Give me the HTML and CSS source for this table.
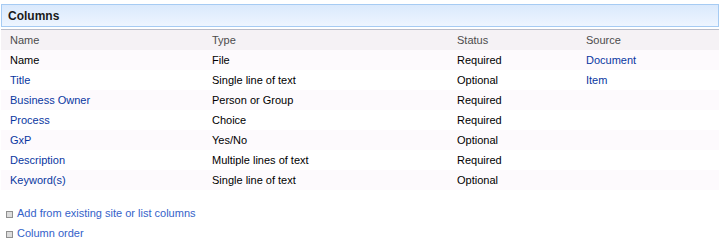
FILE: index.html
```html
<!DOCTYPE html>
<html lang="en">
<head>
    <meta charset="UTF-8">
    <title>Columns</title>
    <link rel="stylesheet" href="styles.css">
</head>
<body>
    <div class="section">
        <!-- Section title -->
        <div class="section-title">Columns</div>

        <table class="columns-table">
            <thead>
                <tr>
                    <th class="col-name">Name</th>
                    <th class="col-type">Type</th>
                    <th class="col-status">Status</th>
                    <th>Source</th>
                </tr>
            </thead>
            <tbody>
                <tr class="alt">
                    <td>Name</td>
                    <td>File</td>
                    <td>Required</td>
                    <td><a href="#">Document</a></td>
                </tr>
                <tr>
                    <td><a href="#">Title</a></td>
                    <td>Single line of text</td>
                    <td>Optional</td>
                    <td><a href="#">Item</a></td>
                </tr>
                <tr class="alt">
                    <td><a href="#">Business Owner</a></td>
                    <td>Person or Group</td>
                    <td>Required</td>
                    <td></td>
                </tr>
                <tr>
                    <td><a href="#">Process</a></td>
                    <td>Choice</td>
                    <td>Required</td>
                    <td></td>
                </tr>
                <tr class="alt">
                    <td><a href="#">GxP</a></td>
                    <td>Yes/No</td>
                    <td>Optional</td>
                    <td></td>
                </tr>
                <tr>
                    <td><a href="#">Description</a></td>
                    <td>Multiple lines of text</td>
                    <td>Required</td>
                    <td></td>
                </tr>
                <tr class="alt">
                    <td><a href="#">Keyword(s)</a></td>
                    <td>Single line of text</td>
                    <td>Optional</td>
                    <td></td>
                </tr>
            </tbody>
        </table>

        <ul class="link-list">
            <li><a href="#">Add from existing site or list columns</a></li>
            <li><a href="#">Column order</a></li>
        </ul>
    </div>
</body>
</html>
```

FILE: styles.css
```css
/* General Styles */
* {
    margin: 0;
    padding: 0;
    box-sizing: border-box;
}

body {
    background-color: #fff;
    font-family: 'Liberation Sans', Arial, sans-serif;
    font-size: 11px;
    color: #000;
}

.section {
    width: 718px;
    margin-left: 1px;
    padding-top: 4px;
}

.section-title {
    height: 23px;
    border: 1px solid #a6cbf3;
    background: linear-gradient(to bottom, #dae9fc, #eef5ff);
    font-weight: bold;
    font-size: 12px;
    color: #1a1a1a;
    padding-left: 6px;
    line-height: 23px;
}

.columns-table {
    width: 100%;
    margin-top: 2px;
    border-collapse: collapse;
    border-top: 1px solid #b9bcc9;
}

.columns-table th {
    text-align: left;
    font-weight: normal;
    color: #4c4c4c;
    background-color: #f5f2f5;
    height: 20px;
    padding: 0 0 0 9px;
}

.columns-table td {
    height: 20px;
    padding: 0 0 0 9px;
    white-space: nowrap;
}

.columns-table .col-name {
    width: 202px;
}

.columns-table .col-type {
    width: 245px;
}

.columns-table .col-status {
    width: 129px;
}

.columns-table tr.alt td {
    background-color: #fdfafd;
}

.columns-table a {
    color: #0937a1;
    text-decoration: none;
}

.link-list {
    list-style: none;
    margin-top: 13px;
}

.link-list li {
    height: 20px;
    line-height: 20px;
    padding-left: 16px;
    position: relative;
}

.link-list li::before {
    content: "";
    position: absolute;
    left: 5px;
    top: 8px;
    width: 5px;
    height: 5px;
    border: 1px solid #909090;
    background-color: #dcdcdc;
}

.link-list a {
    color: #3462c9;
    text-decoration: none;
}
```
